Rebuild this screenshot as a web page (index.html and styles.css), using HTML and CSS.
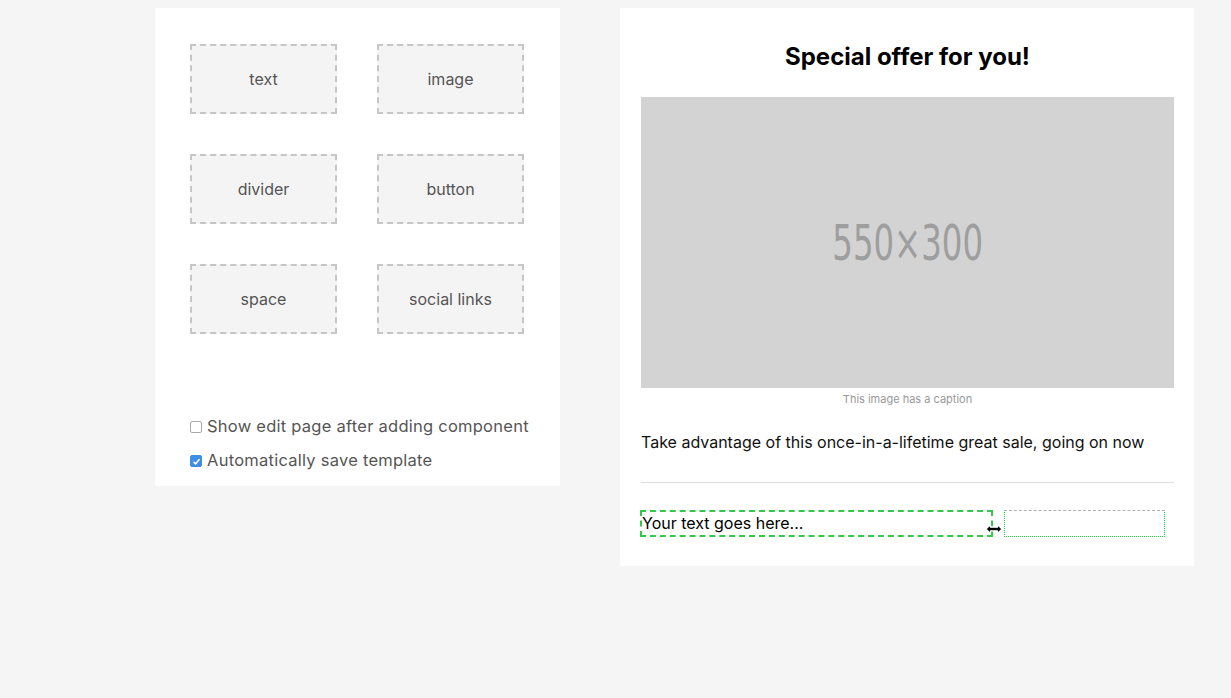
FILE: index.html
```html
<!DOCTYPE HTML>
<html lang="en">
<head>
<meta charset="utf-8" />
<meta name="viewport" content="width=device-width, initial-scale=1.0">
<title>Template editor</title>
<link rel="stylesheet" href="styles.css">
</head>
<body>
<div class="editor">
  <div class="palette">
    <div class="tiles">
      <div class="tile">text</div>
      <div class="tile">image</div>
      <div class="tile">divider</div>
      <div class="tile">button</div>
      <div class="tile">space</div>
      <div class="tile">social links</div>
    </div>
    <div class="options">
      <label class="opt"><span class="box"></span>Show edit page after adding component</label>
      <label class="opt"><span class="box on"><svg width="9" height="9" viewBox="0 0 9 9"><path d="M1.5 4.8 L3.6 6.8 L7.5 2.2" fill="none" stroke="#fff" stroke-width="1.6"/></svg></span>Automatically save template</label>
    </div>
  </div>

  <div class="preview">
    <h1 class="title">Special offer for you!</h1>
    <div class="placeholder"><span>550×300</span></div>
    <div class="caption">This image has a caption</div>
    <p class="lead">Take advantage of this once-in-a-lifetime great sale, going on now</p>
    <hr class="divider">
    <div class="cols">
      <div class="col active">Your text goes here...</div>
      <div class="col empty"></div>
      <!-- resize cursor -->
      <svg class="cursor" width="18" height="12" viewBox="0 0 18 12">
        <path d="M1 6 L5.5 1.5 L5.5 4.2 L12.5 4.2 L12.5 1.5 L17 6 L12.5 10.5 L12.5 7.8 L5.5 7.8 L5.5 10.5 Z" fill="#000" stroke="#fff" stroke-width="1.2" stroke-linejoin="round"/>
      </svg>
    </div>
  </div>
</div>
</body>
</html>
```

FILE: styles.css
```css
body {
  margin: 0;
  background: #f5f5f5;
  font-family: Inter, "Liberation Sans", sans-serif;
  height: 698px;
}

.editor {
  display: flex;
  align-items: flex-start;
  gap: 60px;
  padding: 8px 0 0 155px;
}

/* left side: component palette */
.palette {
  width: 405px;
  box-sizing: border-box;
  background: #fff;
  padding: 36px 36px 15px 35px;
}
.tiles {
  display: grid;
  grid-template-columns: 147px 147px;
  column-gap: 40px;
  row-gap: 40px;
}
.tile {
  height: 70px;
  box-sizing: border-box;
  border: 2px dashed #c6c6c6;
  background: #f4f4f4;
  display: flex;
  align-items: center;
  justify-content: center;
  font-size: 16px;
  color: #555;
}
.options {
  margin-top: 81px;
  display: flex;
  flex-direction: column;
  gap: 12px;
}
.opt {
  display: flex;
  align-items: center;
  white-space: nowrap;
  font-size: 16.5px;
  letter-spacing: 0.25px;
  line-height: 22px;
  color: #555;
}
.box {
  flex: none;
  width: 10px;
  height: 10px;
  border: 1px solid #aaa;
  border-radius: 2px;
  margin: 2px 5px 0 0;
  display: flex;
  align-items: center;
  justify-content: center;
}
.box.on {
  background: #3d8fe6;
  border-color: #3d8fe6;
}

/* right side: template preview */
.preview {
  width: 574px;
  box-sizing: border-box;
  background: #fff;
  padding: 0 20px 29px 21px;
}
.title {
  margin: 33px 0 24px;
  text-align: center;
  font-size: 24px;
  line-height: 32px;
  font-weight: 700;
  color: #000;
}
.placeholder {
  height: 291px;
  background: #d3d3d3;
  display: flex;
  align-items: center;
  justify-content: center;
  font-family: "DejaVu Sans Condensed", "Liberation Sans", sans-serif;
  font-size: 50px;
  color: #9e9e9e;
}
.placeholder span {
  transform: scaleX(0.72);
}
.caption {
  text-align: center;
  font-size: 11px;
  line-height: 14px;
  margin-top: 4px;
  color: #999;
}
.lead {
  margin: 25px 0 0;
  font-size: 16px;
  line-height: 22px;
  color: #111;
}
.divider {
  margin: 29px 0 0;
  border: none;
  border-top: 1px solid #ddd;
}
.cols {
  position: relative;
  display: flex;
  gap: 11px;
  margin: 27px 9px 0 -1px;
}
.col {
  height: 27px;
  box-sizing: border-box;
}
.col.active {
  width: 353px;
  border: 2px dashed #33c84a;
  font-size: 16px;
  line-height: 22px;
  color: #000;
}
.col.empty {
  flex: 1;
  border: 1px dotted #22cc3a;
  border-top: 1px dashed #b0b0b0;
}
.cursor {
  position: absolute;
  left: 345px;
  top: 13px;
}
```
